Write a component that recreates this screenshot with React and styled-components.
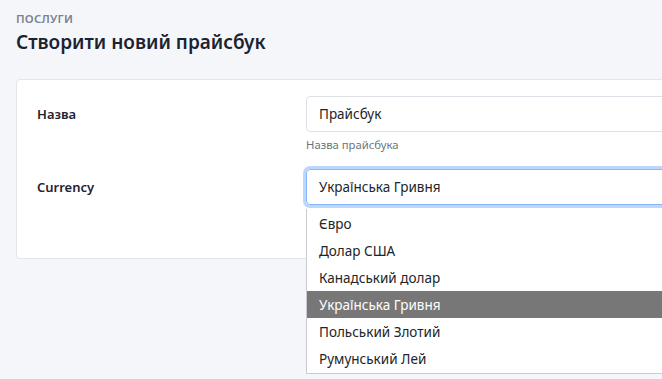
import React from "react";
import styled, { createGlobalStyle } from "styled-components";

const GlobalStyle = createGlobalStyle`
  html {
    overflow: hidden;
  }
  html, body {
    margin: 0;
    padding: 0;
    background: #f5f6fa;
  }
  body {
    min-height: 100vh;
    font-family: "Noto Sans", "Open Sans", Arial, sans-serif;
    color: #212529;
  }
`;

const currencies = [
  "Євро",
  "Долар США",
  "Канадський долар",
  "Українська Гривня",
  "Польський Злотий",
  "Румунський Лей",
];

const App = () => {
  const selected = "Українська Гривня";

  return (
    <>
      <GlobalStyle />
      <Page>
        <Header>
          <Crumb>Послуги</Crumb>
          <Title>Створити новий прайсбук</Title>
        </Header>

        <Card>
          <FormRow>
            <Label>Назва</Label>
            <Field>
              <Input defaultValue="Прайсбук" />
              <Help>Назва прайсбука</Help>
            </Field>
          </FormRow>

          <FormRow>
            <Label>Currency</Label>
            <Field>
              <SelectBox $focused>{selected}</SelectBox>
              {/* open native-like option list */}
              <OptionList>
                {currencies.map((c) => (
                  <Option key={c} $active={c === selected}>
                    {c}
                  </Option>
                ))}
              </OptionList>
            </Field>
          </FormRow>
        </Card>
      </Page>
    </>
  );
};

export default App;

// Styled Components
const Page = styled.div`
  padding: 11px 0 0 16px;
  width: 1000px;
`;

const Header = styled.div`
  margin-bottom: 24px;
`;

const Crumb = styled.div`
  font-size: 11.5px;
  font-weight: 600;
  text-transform: uppercase;
  color: #7b8290;
  letter-spacing: 0.2px;
  line-height: 15px;
`;

const Title = styled.h1`
  margin: 3px 0 0;
  font-size: 19px;
  font-weight: 600;
  color: #1b2331;
  line-height: 26px;
`;

const Card = styled.div`
  background: #fff;
  border: 1px solid #e3e5ea;
  border-radius: 4px;
  padding: 16px 20px 53px;
`;

const FormRow = styled.div`
  display: grid;
  grid-template-columns: 269px 1fr;
  align-items: start;
  margin-bottom: 17px;

  &:last-child {
    margin-bottom: 0;
  }
`;

const Label = styled.label`
  font-size: 13px;
  font-weight: 600;
  color: #1f2430;
  line-height: 36px;
`;

const Field = styled.div`
  position: relative;
`;

const Input = styled.input`
  box-sizing: border-box;
  width: 100%;
  height: 36px;
  padding: 0 12px;
  border: 1px solid #dde1e7;
  border-radius: 4px;
  font-family: inherit;
  font-size: 13.5px;
  color: #212529;
  outline: none;
`;

const Help = styled.div`
  margin-top: 5px;
  font-size: 11.3px;
  color: #6c757d;
  line-height: 15px;
`;

const SelectBox = styled.div`
  box-sizing: border-box;
  height: 36px;
  padding: 0 12px;
  display: flex;
  align-items: center;
  border: 1px solid ${({ $focused }) => ($focused ? "#86b7fe" : "#dde1e7")};
  border-radius: 4px;
  box-shadow: ${({ $focused }) =>
    $focused ? "0 0 0 3px rgba(13, 110, 253, 0.28)" : "none"};
  font-size: 13.5px;
  color: #212529;
`;

const OptionList = styled.div`
  position: absolute;
  top: 40px;
  left: 0;
  right: 0;
  background: #fff;
  border: 1px solid #c9ccd1;
  border-top: none;
  padding: 1px 0 1px;
  z-index: 5;
`;

const Option = styled.div`
  height: 27px;
  display: flex;
  align-items: center;
  padding: 0 12px;
  font-size: 13.5px;
  background: ${({ $active }) => ($active ? "#777777" : "transparent")};
  color: ${({ $active }) => ($active ? "#ffffff" : "#212529")};
`;
